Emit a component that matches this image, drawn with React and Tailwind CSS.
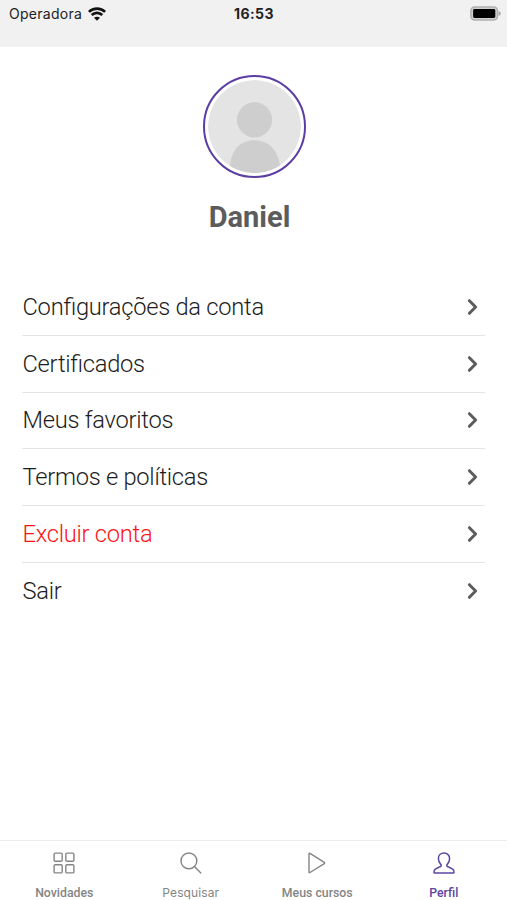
import React, { useState } from 'react';

const menuItems = [
  { id: 'account', label: 'Configurações da conta' },
  { id: 'certificates', label: 'Certificados' },
  { id: 'favorites', label: 'Meus favoritos' },
  { id: 'terms', label: 'Termos e políticas' },
  { id: 'delete', label: 'Excluir conta', danger: true },
  { id: 'logout', label: 'Sair' }
];

const tabs = [
  { id: 'news', label: 'Novidades', icon: GridIcon, font: "font-['Roboto',sans-serif] font-medium text-[12.3px]" },
  { id: 'search', label: 'Pesquisar', icon: SearchIcon, font: "font-['Inter',sans-serif] font-normal text-[12px] tracking-[0.1px]" },
  { id: 'courses', label: 'Meus cursos', icon: PlayIcon, font: "font-['Roboto',sans-serif] font-medium text-[12.3px]" },
  { id: 'profile', label: 'Perfil', icon: PersonIcon, font: "font-['Roboto',sans-serif] font-medium text-[12.3px]" }
];

function WifiIcon() {
  return (
    <svg width="18" height="14" viewBox="0 0 18 14" fill="none" stroke="#111" strokeWidth="2.6">
      <path d="M0.9 4.9C5.4 0.5 12.6 0.5 17.1 4.9" />
      <path d="M3.7 8C6.7 5.1 11.3 5.1 14.3 8" />
      <path d="M9 13.7L6 10.8C7.7 9.3 10.3 9.3 12 10.8Z" fill="#111" stroke="none" />
    </svg>
  );
}

function BatteryIcon() {
  return (
    <svg width="32" height="15" viewBox="0 0 32 15" fill="none">
      <rect x="0.9" y="0.9" width="26.6" height="13.2" rx="3.8" fill="#d0d0d0" stroke="#b0b0b0" strokeWidth="1.5" />
      <rect x="3.1" y="3" width="22.2" height="9" rx="1.4" fill="#000" />
      <path d="M28.6 5C31.6 6.2 31.6 8.8 28.6 10Z" fill="#a9a9a9" />
    </svg>
  );
}

function GridIcon() {
  return (
    <svg width="22" height="22" viewBox="0 0 22 22" fill="none" stroke="currentColor" strokeWidth="1.4">
      <rect x="1.1" y="1.1" width="8.1" height="8.1" rx="1.2" />
      <rect x="12.8" y="1.1" width="8.1" height="8.1" rx="1.2" />
      <rect x="1.1" y="12.8" width="8.1" height="8.1" rx="1.2" />
      <rect x="12.8" y="12.8" width="8.1" height="8.1" rx="1.2" />
    </svg>
  );
}

function SearchIcon() {
  return (
    <svg width="22" height="22" viewBox="0 0 22 22" fill="none" stroke="currentColor" strokeWidth="1.4" strokeLinecap="round">
      <circle cx="8.9" cy="8.9" r="7.9" />
      <path d="M14.5 14.5L20.8 20.9" />
    </svg>
  );
}

function PlayIcon() {
  return (
    <svg width="22" height="22" viewBox="0 0 22 22" fill="none" stroke="currentColor" strokeWidth="1.4" strokeLinejoin="round">
      <path d="M3 2V19.9Q3 21.1 4 20.5L18.3 11.6Q19 11 18.3 10.4L4 1.4Q3 0.8 3 2Z" />
    </svg>
  );
}

function PersonIcon() {
  return (
    <svg width="22" height="22" viewBox="0 0 22 22" fill="none" stroke="currentColor" strokeWidth="1.5" strokeLinejoin="round">
      <path d="M11 1.1C7.7 1.1 5.4 3.4 5.4 6.4C5.4 8.8 6.2 10.8 7.6 12.1C8.6 13 8.3 14.2 7.2 14.7C5.5 15.6 3.1 16.2 1.9 17.6C1.2 18.4 1 19.5 1 20.4Q1 20.9 1.6 20.9H20.4Q21 20.9 21 20.4C21 19.5 20.8 18.4 20.1 17.6C18.9 16.2 16.5 15.6 14.8 14.7C13.7 14.2 13.4 13 14.4 12.1C15.8 10.8 16.6 8.8 16.6 6.4C16.6 3.4 14.3 1.1 11 1.1Z" />
    </svg>
  );
}

function Chevron() {
  return (
    <svg width="12" height="18" viewBox="0 0 12 18" fill="none" stroke="#5c5c5c" strokeWidth="3" strokeLinecap="round" strokeLinejoin="round">
      <path d="M2.4 2.7L8.6 9L2.4 15.3" />
    </svg>
  );
}

export default function App() {
  const [activeTab, setActiveTab] = useState('profile');

  return (
    <div className="flex flex-col w-full h-[900px] bg-white font-['Roboto',sans-serif] overflow-hidden">
      {/* Status bar */}
      <header className="h-[47px] shrink-0 bg-[#f1f1f1]">
        <div className="grid grid-cols-3 items-center h-[27px] pl-[9px] pr-[5px] font-['Inter',sans-serif] text-[#222]">
          <div className="flex items-center gap-1.5 text-[14px]">
            <span className="tracking-[0.27px]">Operadora</span>
            <WifiIcon />
          </div>
          <span className="pr-[3px] text-center text-[14px] font-bold tracking-[0.45px]">16:53</span>
          <div className="flex justify-end"><BatteryIcon /></div>
        </div>
      </header>

      {/* Avatar and name */}
      <section className="flex flex-col items-center pt-7">
        <div className="w-[103px] h-[103px] ml-px rounded-full border-2 border-[#5b3ea4] p-[3px]">
          <svg className="w-full h-full rounded-full" viewBox="0 0 94 94">
            <circle cx="47" cy="47" r="47" fill="#e4e4e4" />
            <circle cx="47" cy="40.3" r="17.8" fill="#cecece" />
            <path d="M22 87C24 70 33 61 47 61S70 70 73 87C58 96.5 37 96.5 22 87Z" fill="#cecece" />
          </svg>
        </div>
        <h1 className="mt-[19px] pr-2 text-[29px] leading-10 font-bold text-[#5c5c5c]">Daniel</h1>
      </section>

      {/* Options */}
      <nav className="mt-[42.2px] px-[22px]">
        {menuItems.map(item => (
          <button
            key={item.id}
            type="button"
            className="flex w-full h-[56.7px] items-center justify-between border-b border-[#e4e4e4] last:border-b-0 pl-[0.5px] pr-1.5 text-left"
          >
            <span
              className={`pt-[1.5px] text-[23.7px] font-light tracking-[-0.26px] [font-feature-settings:'liga'] ${item.danger ? 'text-[#fa1418]' : 'text-[#1c1c1c]'}`}
            >
              {item.label}
            </span>
            <Chevron />
          </button>
        ))}
      </nav>

      {/* Tab bar */}
      <footer className="mt-auto grid grid-cols-4 h-[60px] shrink-0 border-t border-[#ececec] pl-px">
        {tabs.map(({ id, label, icon: Icon, font }) => (
          <button
            key={id}
            type="button"
            onClick={() => setActiveTab(id)}
            className={`flex flex-col items-center pt-[11px] ${activeTab === id ? 'text-[#5b46a5]' : 'text-[#858585]'}`}
          >
            <Icon />
            <span className={`mt-[11px] leading-4 ${font}`}>{label}</span>
          </button>
        ))}
      </footer>
    </div>
  );
}
